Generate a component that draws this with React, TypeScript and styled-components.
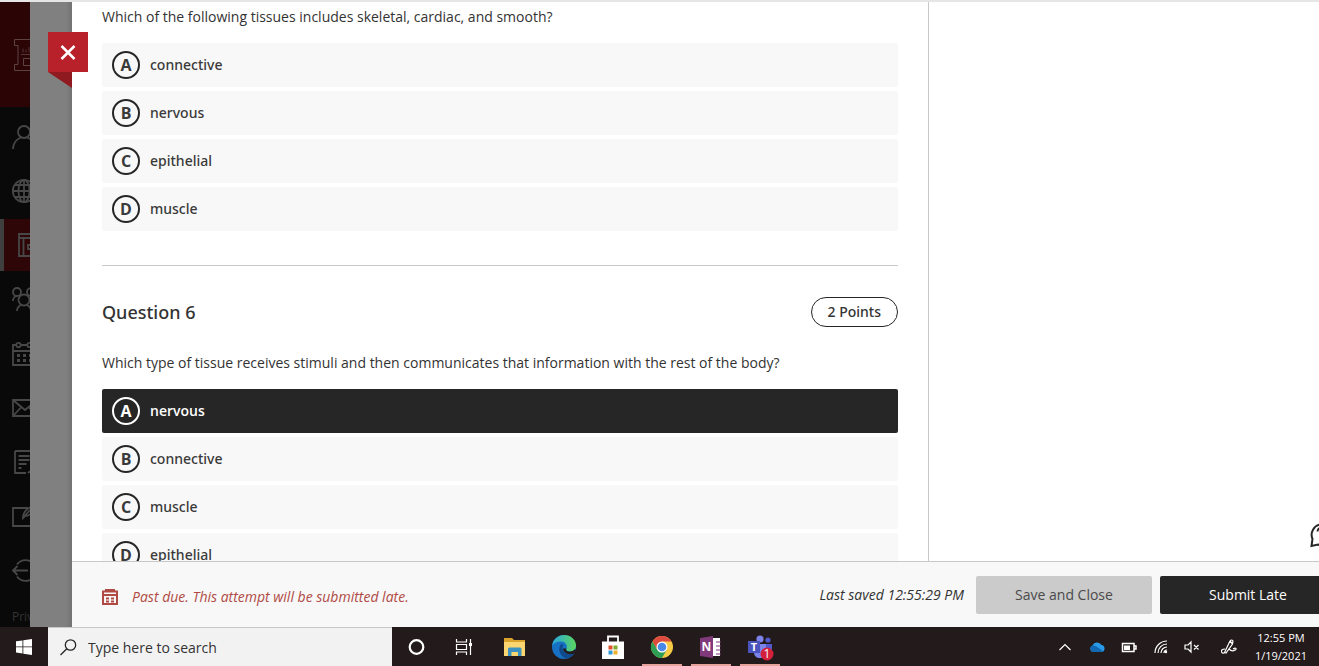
import React from "react";
import styled, { createGlobalStyle } from "styled-components";

const GlobalStyle = createGlobalStyle`
  *, *::before, *::after { box-sizing: border-box; }
  body {
    margin: 0;
    background: #fff;
    color: #333;
    font-family: "Open Sans", "Noto Sans", sans-serif;
    font-size: 14px;
    line-height: 20px;
  }
  button, input { font: inherit; }
`;

const Screen = styled.div`
  display: flex;
  flex-direction: column;
  height: 100vh;
  overflow: hidden;
  border-top: 2px solid #e6e6e6;
`;

const Workspace = styled.div`
  display: flex;
  flex: 1;
  min-height: 0;
`;

const Sidebar = styled.nav`
  display: flex;
  flex-direction: column;
  flex: 0 0 30px;
  overflow: hidden;
  background: #090909;
`;

const Brand = styled.div`
  display: flex;
  align-items: center;
  flex: 0 0 105px;
  padding-left: 12px;
  margin-bottom: 3px;
  background: #2b0405;

  svg { flex: none; }
`;

const NavLink = styled.a<{ $active?: boolean }>`
  display: flex;
  align-items: center;
  flex: 0 0 52px;
  margin: 1px 0;
  padding-left: 12px;
  background: ${(p) => (p.$active ? "#2f0607" : "transparent")};
  box-shadow: ${(p) => (p.$active ? "inset 4px 0 0 #3f3f3f" : "none")};
  color: #474747;

  svg { flex: none; }
`;

const Privacy = styled.a`
  padding: 11px 0 0 12px;
  color: #333;
  font-size: 12px;
  text-decoration: none;
  white-space: nowrap;
`;

const Backdrop = styled.div`
  flex: 0 0 42px;
  background: linear-gradient(to right, #808080 36px, #727272 42px);
`;

const CloseButton = styled.button`
  position: absolute;
  top: 32px;
  left: 48px;
  width: 40px;
  height: 56px;
  padding: 0;
  border: 0;
  background: none;
  cursor: pointer;

  svg { display: block; }
`;

const Panel = styled.section`
  display: flex;
  flex-direction: column;
  flex: 1;
  min-width: 0;
  margin-right: -17px;
  background: #fff;
`;

const Content = styled.div`
  display: grid;
  grid-template-columns: minmax(0, 857fr) minmax(0, 407fr);
  grid-template-rows: minmax(0, 1fr);
  flex: 1;
  min-height: 0;
`;

const Questions = styled.main`
  overflow-y: auto;
  scrollbar-width: none;
  padding: 5px 30px 30px;
  border-right: 1px solid #c8c8c8;
`;

const Aside = styled.aside`
  display: flex;
  align-items: flex-end;
  justify-content: flex-end;
  padding-bottom: 13px;
`;

const HelpButton = styled.button`
  padding: 0;
  border: 0;
  background: none;
  color: #262626;

  svg { display: block; }
`;

const Question = styled.fieldset`
  min-width: 0;
  margin: 0;
  padding: 0;
  border: 0;

  & + & {
    margin-top: 34px;
    padding-top: 31px;
    border-top: 1px solid #c8c8c8;
  }
`;

const QuestionHeader = styled.header`
  display: flex;
  align-items: center;
  justify-content: space-between;
  margin-bottom: 26px;
`;

const QuestionTitle = styled.h2`
  margin: 0;
  font-family: "Noto Sans", sans-serif;
  font-size: 18px;
  font-weight: 500;
  line-height: 30px;
`;

const Points = styled.span`
  height: 30px;
  padding: 0 16px;
  border: 1px solid #262626;
  border-radius: 15px;
  font-family: "Noto Sans", sans-serif;
  font-weight: 500;
  line-height: 28px;
`;

const Prompt = styled.p`
  margin: 0 0 16px;
`;

const Options = styled.div`
  display: flex;
  flex-direction: column;
  gap: 4px;
`;

const Option = styled.label`
  display: flex;
  align-items: center;
  gap: 10px;
  height: 44px;
  padding: 0 10px;
  border-radius: 2px;
  background: #f8f8f8;
  color: #3a3a3a;
  font-family: "Noto Sans", sans-serif;
  font-weight: 500;
  cursor: pointer;

  &:has(input:checked) {
    background: #262626;
    color: #fff;
    font-family: "Open Sans", sans-serif;
    font-weight: 600;
  }
`;

const Marker = styled.span`
  display: grid;
  place-items: center;
  font-family: "Open Sans", sans-serif;
  font-size: 16px;
  font-weight: 700;

  > * { grid-area: 1 / 1; }
`;

const Radio = styled.input`
  appearance: none;
  width: 28px;
  height: 28px;
  margin: 0;
  border: 2px solid #262626;
  border-radius: 50%;

  &:checked { border-color: #fff; }
`;

const ActionBar = styled.footer`
  display: flex;
  align-items: center;
  flex: 0 0 66px;
  gap: 8px;
  padding-left: 30px;
  border-top: 1px solid #c8c8c8;
  background: #f8f8f8;
`;

const PastDue = styled.p`
  display: flex;
  align-items: center;
  gap: 14px;
  flex: 1;
  margin: 0;
  padding-top: 5px;
  color: #b04a44;
  font-style: italic;
`;

const LastSaved = styled.span`
  margin-right: 4px;
  font-style: italic;
`;

const ActionButton = styled.button<{ $primary?: boolean }>`
  width: 176px;
  height: 38px;
  border: 0;
  border-radius: 2px;
  background: ${(p) => (p.$primary ? "#262626" : "#cbcbcb")};
  color: ${(p) => (p.$primary ? "#fff" : "#4a4a4a")};
  font-weight: ${(p) => (p.$primary ? 500 : 400)};
`;

const Taskbar = styled.div`
  display: flex;
  flex: 0 0 39px;
  background: #231a1b;
  color: #fff;
`;

const TaskButton = styled.button<{ $open?: boolean; $width?: number }>`
  display: grid;
  place-items: center;
  flex: 0 0 ${(p) => p.$width ?? 49}px;
  padding: 0;
  border: 0;
  background: ${(p) =>
    p.$open
      ? "linear-gradient(#e5a29d, #e5a29d) center bottom / 40px 2px no-repeat"
      : "none"};
  color: inherit;

  svg { display: block; }
`;

const SearchBox = styled.label`
  display: flex;
  align-items: center;
  gap: 11px;
  flex: 0 1 344px;
  padding: 1px 0 0 12px;
  border-top: 1px solid #c8c8c8;
  background: #f2f2f2;
  color: #262626;
`;

const SearchInput = styled.input`
  flex: 1;
  min-width: 0;
  padding: 0;
  border: 0;
  outline: 0;
  background: none;
  color: inherit;

  &::placeholder { color: #333; opacity: 1; }
`;

const Tray = styled.div`
  display: flex;
  margin-left: auto;
`;

const Clock = styled.time`
  display: flex;
  flex-direction: column;
  justify-content: center;
  padding: 0 12px 0 4px;
  font-size: 11px;
  line-height: 18px;
  text-align: center;
`;

const NavSvg = ({ children }: { children: React.ReactNode }) => (
  <svg width="26" height="26" viewBox="0 0 26 26" fill="none" stroke="currentColor" strokeWidth="1.8" aria-hidden="true">
    {children}
  </svg>
);

const navItems: { name: string; active?: boolean; icon: React.ReactNode }[] = [
  { name: "Profile", icon: <><circle cx="12" cy="8" r="6" /><path d="M1 25c0-6 4-10 8-11.500M23 25c0-6-4-10-8-11.500" /></> },
  { name: "Institution Page", icon: <><circle cx="12" cy="13" r="11.200" /><ellipse cx="12" cy="13" rx="5.500" ry="11" /><path d="M12 2v22M1 13h22M3 7h18M3 19h18" /></> },
  { name: "Courses", active: true, icon: <path d="M7 2h20v22H7zM11.500 6v18M7 6h20M21 13h-5v4h5" /> },
  { name: "Organizations", icon: <><circle cx="5" cy="6" r="4" /><circle cx="19" cy="6" r="4" /><circle cx="12" cy="14" r="5.500" /><path d="M1 15c0-3 2-5 4-5M23 15c0-3-2-5-4-5M5 25c0-3 2-5 4-6M19 25c0-3-2-5-4-6" /></> },
  { name: "Calendar", icon: <><path d="M4 5H1v20h22V5h-3M9 5h6M1 11h22" /><circle cx="6.500" cy="5" r="2.200" /><circle cx="17.500" cy="5" r="2.200" /><path d="M5 15.500h3M11 15.500h3M17 15.500h3M5 20.500h3M11 20.500h3M17 20.500h3" strokeWidth="3" /></> },
  { name: "Messages", icon: <path d="M1 6h24v16H1zM1 6l12 10L25 6M1 22l8-8.500M25 22l-8-8.500" /> },
  { name: "Grades", icon: <path d="M3 3h18v15M3 3v22h11M6.500 8h11M6.500 12h11M6.500 16h8M6.500 20h3M16 25l6-5" /> },
  { name: "Tools", icon: <path d="M16 6H1v18h21v-8M11 16c0-6 4-10 11-12-1 7-5 10-9 10zM11 16l7-8" /> },
  { name: "Sign Out", icon: <path d="M5 8.500a10.500 10.500 0 0 1 17 0M5 20.500a10.500 10.500 0 0 0 17 0M1 14.500h15M5.500 10l-4.500 4.500L5.500 19" /> },
];

const questions = [
  {
    id: "q5",
    prompt: "Which of the following tissues includes skeletal, cardiac, and smooth?",
    options: ["connective", "nervous", "epithelial", "muscle"],
  },
  {
    id: "q6",
    title: "Question 6",
    points: "2 Points",
    prompt: "Which type of tissue receives stimuli and then communicates that information with the rest of the body?",
    options: ["nervous", "connective", "muscle", "epithelial"],
    selected: 0,
  },
];

const taskIcons: { name: string; open?: boolean; icon: React.ReactNode }[] = [
  { name: "Cortana", icon: <circle cx="11.500" cy="12" r="6.800" fill="none" stroke="#fff" strokeWidth="2.200" /> },
  {
    name: "Task View",
    icon: <><path d="M2.500 4v3h10V4M2.500 20v-3h10v3M2.500 9.500h10v5h-10z" fill="none" stroke="#fff" strokeWidth="1.200" /><path d="M16.500 4v16" stroke="#fff" strokeWidth="1.200" /><path d="M15 8h3v3h-3z" fill="#fff" /></>,
  },
  {
    name: "File Explorer",
    icon: <><path d="M1 3h8l2 2h11v4H1z" fill="#d9a32c" /><path d="M1 7h21v14H1z" fill="#fbd670" /><path d="M5 21v-7q0-1.500 1.500-1.500h10.500q1.500 0 1.500 1.500v7h-3.500v-4H8.500v4z" fill="#3c93c2" /></>,
  },
  {
    name: "Microsoft Edge",
    icon: (
      <>
        <defs>
          <linearGradient id="edgeTop" x1="0" x2="1"><stop offset="0" stopColor="#2aa5e0" /><stop offset="1" stopColor="#5bd65f" /></linearGradient>
        </defs>
        <circle cx="12" cy="12" r="12" fill="#1670c4" />
        <path d="M0 11C1 4 6 0 12 0c7 0 12 5 12 10.500 0 4-3 6-6 6-3.500 0-4.500-1.500-3.500-3C16 10 13 6.500 9 6.500c-4 0-8 2-9 4.500z" fill="url(#edgeTop)" />
        <path d="M9 9.500C6 12 6.500 20 13.500 23.500 18 23 21 20.500 22.500 18c-6 3-12 0-12-5 0-1.500.500-2.500 1-3-.500-.800-1.500-1-2.500-.500z" fill="#114a8b" />
        <path d="M14.500 13.500c-1 1.500 0 3 3.500 3 2 0 4-1 5-2.500l1 2-1.500 2.500c-6 2-11-.500-11.500-5z" fill="#231a1b" />
      </>
    ),
  },
  {
    name: "Microsoft Store",
    icon: <><path d="M7 8V1.500h10V8" fill="none" stroke="#fff" strokeWidth="1.800" /><path d="M1 6.500h22V24H1z" fill="#fff" /><path d="M7.500 10.500h4v4h-4z" fill="#e2512d" /><path d="M12.500 10.500h4v4h-4z" fill="#7dae2e" /><path d="M7.500 15.500h4v4h-4z" fill="#2e9bd6" /><path d="M12.500 15.500h4v4h-4z" fill="#eeb12d" /></>,
  },
  {
    name: "Google Chrome",
    open: true,
    icon: (
      <>
        <circle cx="12" cy="12" r="11" fill="#f8cb45" />
        <path d="M2.470 6.500A11 11 0 0 1 21.530 6.500H12L7.240 14.750z" fill="#dd4b3e" />
        <path d="M2.470 6.500A11 11 0 0 0 12 23L16.760 14.750H7.240z" fill="#2f9e55" />
        <circle cx="12" cy="12" r="5.500" fill="#fff" />
        <circle cx="12" cy="12" r="4.300" fill="#4a89e8" />
      </>
    ),
  },
  {
    name: "OneNote",
    open: true,
    icon: (
      <>
        <path d="M12 3h9v18h-9z" fill="#fff" />
        <path d="M17 7h5M17 11h5M17 15h5M17 19h5" stroke="#80397b" strokeWidth="1" />
        <path d="M1 3l13-2v22L1 21z" fill="#80397b" />
        <text x="7.500" y="16" textAnchor="middle" fontSize="12" fontWeight="700" fill="#fff">N</text>
      </>
    ),
  },
  {
    name: "Microsoft Teams",
    open: true,
    icon: (
      <>
        <circle cx="12" cy="4" r="3.600" fill="#7b83eb" />
        <circle cx="20" cy="5" r="2.600" fill="#5059c9" />
        <path d="M16 9h8v6c0 3-2 5-5 5z" fill="#5059c9" />
        <path d="M6 9h12v8c0 4-2.500 6-6 6s-6-2-6-6z" fill="#7b83eb" />
        <path d="M0 6h12v12H0z" fill="#4b53bc" />
        <text x="6" y="16" textAnchor="middle" fontSize="11" fontWeight="700" fill="#fff">T</text>
        <circle cx="19" cy="19" r="6.500" fill="#d3203b" />
        <text x="19" y="23" textAnchor="middle" fontSize="12" fill="#fff">1</text>
      </>
    ),
  },
];

const trayIcons: { name: string; width: number; icon: React.ReactNode }[] = [
  { name: "Show hidden icons", width: 32, icon: <path d="M2.500 11l5.500-5.500 5.500 5.500" /> },
  { name: "OneDrive", width: 32, icon: <><path d="M3.500 13a3.500 3.500 0 0 1 0-6.500A5 5 0 0 1 12.500 6 3.600 3.600 0 0 1 13 13z" fill="#2a9be8" stroke="none" /><path d="M3.500 13a3.500 3.500 0 0 1 0-6.500q2-.5 4 1L14 12q-.500 1-1.500 1z" fill="#1268b3" stroke="none" /></> },
  { name: "Battery", width: 33, icon: <><path d="M1.500 4.500h11.500v8H1.500zM13.500 7h1.500v3h-1.500" strokeWidth="1.500" /><path d="M3 6.500h6v4.500H3z" fill="#fff" stroke="none" /></> },
  { name: "Network", width: 31, icon: <><path d="M2 14A12 12 0 0 1 14 2M5 14a9 9 0 0 1 9-9M8 14a6 6 0 0 1 6-6" /><path d="M11 14a3 3 0 0 1 3-3" /><circle cx="13" cy="13" r="1.200" fill="#fff" stroke="none" /></> },
  { name: "Volume muted", width: 30, icon: <path d="M1 6h3l3-3v10l-3-3H1zM10 6l4.500 4.500M14.500 6L10 10.500" /> },
  { name: "Windows Ink", width: 44, icon: <path d="M3.500 13.500L9 2q1.500-2 3 0l-.500 3L5 14zM9 2l2.500 3M12 10c3-2 4 0 2 1-2 1.500-4 1-6-1M4 10q-4 0-3.500 3 1 2 3.500.500" /> },
];

export default function App() {
  return (
    <>
      <GlobalStyle />
      <Screen>
        <Workspace>
          <Sidebar aria-label="Main">
            <Brand>
              <svg width="26" height="34" viewBox="0 0 26 34" fill="none" stroke="#5d4243" aria-hidden="true">
                <path d="M26 1.500H2.500v6H6v19H2.500v6H26M11.500 20.500h16v7h-16z" />
                <path d="M9 16.500h16M11 14.500v-4M14 14.500v-3M17 14.500V9M20 14.500v-3" strokeWidth="0.800" />
              </svg>
            </Brand>
            {navItems.map((item) => (
              <NavLink key={item.name} href="#" aria-label={item.name} $active={item.active}>
                <NavSvg>{item.icon}</NavSvg>
              </NavLink>
            ))}
            <Privacy href="#">Privacy</Privacy>
          </Sidebar>
          <Backdrop />
          <Panel>
            <Content>
              <Questions>
                {questions.map((q) => (
                  <Question key={q.id} aria-labelledby={`${q.id}-prompt`}>
                    {q.title && (
                      <QuestionHeader>
                        <QuestionTitle>{q.title}</QuestionTitle>
                        <Points>{q.points}</Points>
                      </QuestionHeader>
                    )}
                    <Prompt id={`${q.id}-prompt`}>{q.prompt}</Prompt>
                    <Options>
                      {q.options.map((text, i) => (
                        <Option key={text}>
                          <Marker>
                            <Radio type="radio" name={q.id} defaultChecked={q.selected === i} />
                            <span>{"ABCD"[i]}</span>
                          </Marker>
                          {text}
                        </Option>
                      ))}
                    </Options>
                  </Question>
                ))}
              </Questions>
              <Aside>
                <HelpButton aria-label="Help">
                  <svg width="26" height="26" viewBox="0 0 26 26" fill="none" stroke="currentColor" strokeWidth="2" aria-hidden="true">
                    <path d="M1.500 24l1-7A10.500 10.500 0 1 1 8 22.500z" />
                    <path d="M7.500 9.500a4 4 0 1 1 6 3.500q-1.500.800-1.500 2.500M12 17.500v2" />
                  </svg>
                </HelpButton>
              </Aside>
            </Content>
            <ActionBar>
              <PastDue>
                <svg width="16" height="16" viewBox="0 0 16 16" fill="none" stroke="currentColor" aria-hidden="true">
                  <path d="M1 2.500h14V15H1zM1 6h14" strokeWidth="2" />
                  <path d="M3 1h10" strokeWidth="2" />
                  <path d="M4 9.500h3M9 9.500h3M4 12.500h3M9 12.500h3" strokeWidth="1.800" />
                </svg>
                Past due. This attempt will be submitted late.
              </PastDue>
              <LastSaved>Last saved 12:55:29 PM</LastSaved>
              <ActionButton type="button">Save and Close</ActionButton>
              <ActionButton type="button" $primary>Submit Late</ActionButton>
            </ActionBar>
          </Panel>
        </Workspace>
        <Taskbar>
          <TaskButton aria-label="Start" $width={48}>
            <svg width="16" height="16" viewBox="0 0 16 16" fill="#fff" aria-hidden="true">
              <path d="M0 2.300l6.500-.900v6.100H0zM7.300 1.300L16 0v7.500H7.300zM0 8.300h6.500v6.200L0 13.600zM7.300 8.300H16V16l-8.700-1.300z" />
            </svg>
          </TaskButton>
          <SearchBox>
            <svg width="17" height="17" viewBox="0 0 17 17" fill="none" stroke="currentColor" strokeWidth="1.300" aria-hidden="true">
              <circle cx="10.500" cy="6" r="5.200" />
              <path d="M6.800 9.700L.500 16" />
            </svg>
            <SearchInput type="text" placeholder="Type here to search" aria-label="Type here to search" />
          </SearchBox>
          {taskIcons.map((item) => (
            <TaskButton key={item.name} aria-label={item.name} $open={item.open}>
              <svg width="24" height="24" viewBox="0 0 24 24" overflow="visible" aria-hidden="true">{item.icon}</svg>
            </TaskButton>
          ))}
          <Tray>
            {trayIcons.map((item) => (
              <TaskButton key={item.name} aria-label={item.name} $width={item.width}>
                <svg width="16" height="16" viewBox="0 0 16 16" fill="none" stroke="#fff" strokeWidth="1.200" aria-hidden="true">{item.icon}</svg>
              </TaskButton>
            ))}
            <Clock>
              <span>12:55 PM</span>
              <span>1/19/2021</span>
            </Clock>
          </Tray>
        </Taskbar>
      </Screen>
      <CloseButton type="button" aria-label="Close">
        <svg width="40" height="56" viewBox="0 0 40 56" aria-hidden="true">
          <path d="M0 40h24v16z" fill="#8f1b20" />
          <path d="M0 0h40v40H0z" fill="#b8202a" />
          <path d="M13.500 14l13 13M26.500 14l-13 13" stroke="#fff" strokeWidth="2.500" />
        </svg>
      </CloseButton>
    </>
  );
}
